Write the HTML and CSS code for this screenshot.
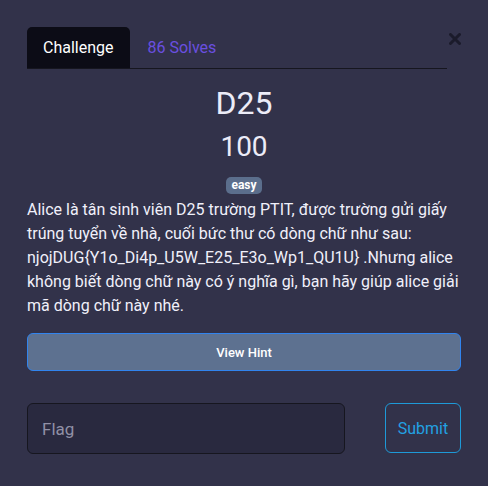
FILE: index.html
```html
<!DOCTYPE html>
<html lang="vi">
<head>
<meta charset="utf-8">
<link rel="stylesheet" href="styles.css">
</head>
<body>
<div class="modal">
  <div class="nav-row">
    <div class="tabs">
      <div class="tab active">Challenge</div>
      <div class="tab link">86 Solves</div>
    </div>
    <button class="close" aria-label="Close">
      <svg width="12" height="12" viewBox="0 0 12 12"><path d="M1.5 1.5L10.5 10.5M10.5 1.5L1.5 10.5" stroke="#1b1b2b" stroke-width="3" stroke-linecap="round"/></svg>
    </button>
  </div>
  <h2 class="title">D25</h2>
  <h3 class="value">100</h3>
  <div class="tags"><span class="badge">easy</span></div>
  <p class="desc">Alice là tân sinh viên D25 trường PTIT, được trường gửi giấy trúng tuyển về nhà, cuối bức thư có dòng chữ như sau: njojDUG{Y1o_Di4p_U5W_E25_E3o_Wp1_QU1U} .Nhưng alice không biết dòng chữ này có ý nghĩa gì, bạn hãy giúp alice giải mã dòng chữ này nhé.</p>
  <button class="hint">View Hint</button>
  <div class="submit-row">
    <input class="flag" type="text" placeholder="Flag">
    <button class="submit">Submit</button>
  </div>
</div>
</body>
</html>
```
FILE: styles.css
```css
* { box-sizing: border-box; }
html, body { margin: 0; padding: 0; }
body {
  background: #32324a;
  font-family: Roboto, "Liberation Sans", sans-serif;
  color: #f0f0fa;
  width: 488px;
  height: 486px;
  overflow: hidden;
}
.modal {
  padding: 27px 27px 0 27px;
}
.nav-row {
  display: flex;
  align-items: flex-start;
}
.tabs {
  flex: 1;
  display: flex;
  border-bottom: 1px solid #16161f;
  height: 42px;
}
.tab {
  height: 41px;
  padding: 0 16px;
  font-size: 16px;
  line-height: 41px;
}
.tab.active {
  background: #0c0c16;
  color: #fff;
  border-radius: 5px 5px 0 0;
}
.tab.link {
  color: #6a4fe0;
  padding-left: 18px;
}
.close {
  background: none;
  border: 0;
  padding: 0;
  margin: 6px 0 0 2px;
  width: 12px;
  height: 12px;
  display: flex;
}
.title {
  margin: 15px 0 0;
  text-align: center;
  font-weight: 400;
  font-size: 32px;
  line-height: 38px;
  color: #ececf8;
}
.value {
  margin: 8px 0 0;
  text-align: center;
  font-weight: 400;
  font-size: 28px;
  line-height: 34px;
  color: #ececf8;
}
.tags {
  text-align: center;
  margin-top: 13px;
  height: 17px;
  line-height: 17px;
}
.badge {
  display: inline-block;
  vertical-align: top;
  background: #5b6e8c;
  color: #fff;
  font-weight: 700;
  font-size: 12px;
  line-height: 17px;
  height: 17px;
  padding: 0 5px;
  border-radius: 5px;
}
.desc {
  margin: 4px 0 0;
  font-size: 16px;
  line-height: 24px;
}
.hint {
  display: block;
  width: 100%;
  margin-top: 15px;
  height: 38px;
  background: #5d7190;
  border: 1.5px solid #3184ee;
  border-radius: 6px;
  color: #fff;
  font-family: Roboto, "Liberation Sans", sans-serif;
  font-size: 13px;
  font-weight: 500;
}
.submit-row {
  display: flex;
  gap: 40px;
  margin-top: 32px;
  align-items: flex-start;
}
.flag {
  flex: 1;
  height: 51px;
  background: #29293f;
  border: 1px solid #16161f;
  border-radius: 6px;
  padding: 0 14px;
  font-family: Roboto, "Liberation Sans", sans-serif;
  font-size: 17px;
  color: #e6e6f2;
  outline: none;
}
.flag::placeholder { color: #9090a6; }
.submit {
  width: 76px;
  height: 50px;
  background: transparent;
  border: 1px solid #1e9ad8;
  border-radius: 6px;
  color: #22a1e2;
  font-family: Roboto, "Liberation Sans", sans-serif;
  font-size: 16px;
  padding: 0;
}
```
